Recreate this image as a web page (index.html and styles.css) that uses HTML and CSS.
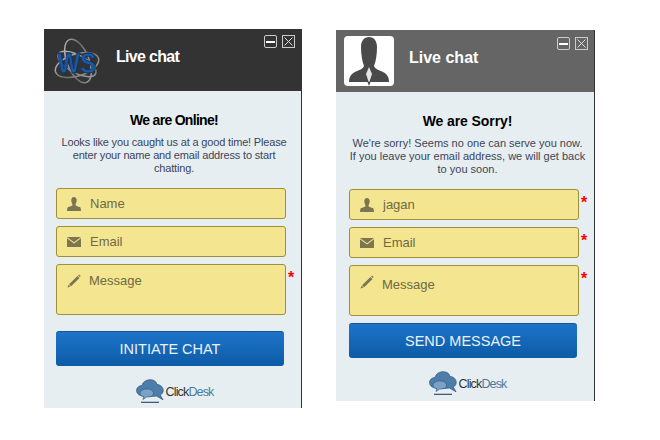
FILE: index.html
```html
<!DOCTYPE html>
<html lang="en">
<head>
<meta charset="utf-8">
<title>Live chat</title>
<link rel="stylesheet" href="styles.css">
</head>
<body>
<svg class="defs" width="0" height="0">
  <symbol id="i-user" viewBox="0 0 14 14"><path d="M7 0C5.300 0 4.300 1.300 4.300 3.200c0 1.500.5 2.900 1.100 3.700.2.700.1 1.500-.5 1.900-1.400.7-3.700 1-4.500 2L0 14h14l-.4-3.200c-.8-1-3.100-1.300-4.500-2-.6-.4-.7-1.200-.5-1.900.6-.8 1.100-2.200 1.100-3.700C9.700 1.300 8.700 0 7 0z"/></symbol>
  <symbol id="i-mail" viewBox="0 0 14 10"><path d="M0 0h14L7 5.200z"/><path d="M0 1.300V10h14V1.300L7 6.600z"/></symbol>
  <symbol id="i-pen" viewBox="0 0 14 14"><path d="M12 .4l1.700 1.700-.9.9-1.700-1.700zM10.500 1.900l2 2-8.400 8.300-2-2zM1.700 10.800l1.800 1.800-3.100 1z"/></symbol>
  <symbol id="i-cloud" viewBox="0 0 28 24">
    <path fill="#4f7da9" stroke="#2f5f8c" stroke-width=".8" d="M6 6.500C7 2.500 11 .4 15 .8c3.500.3 5.500 2.200 6 4.700 3.500.2 6.300 2.700 6.200 6 0 2-1.200 3.700-3 4.500l2.800 4.800-6.500-3.800c-3.500.6-9 .7-12.500.1C3 17 .5 14.500.6 11.200.7 8.700 3 6.600 6 6.500z"/>
    <path fill="#7ba2c6" stroke="#2f5f8c" stroke-width=".7" d="M4 15c-.5-3 3-5 7-5s7 2 6.500 5c-.4 2-3 3-6 3l-1 .1L7 20.500l.8-2.900C5.500 17.300 4.300 16.500 4 15z"/>
    <path d="M5 23.300h18" stroke="#24425f" stroke-width="1.100"/>
  </symbol>
  <linearGradient id="chrome" x1="0" y1="0" x2="1" y2="1">
    <stop offset="0" stop-color="#c8c8c8"/>
    <stop offset=".5" stop-color="#6e6e6e"/>
    <stop offset="1" stop-color="#a8a8a8"/>
  </linearGradient>
</svg>

<div class="page">

  <div class="panel panel-online">
    <div class="head head-dark">
      <div class="logo">
        <svg width="46" height="46" viewBox="0 0 46 46">
          <g fill="none" stroke="url(#chrome)" stroke-width="1.500">
            <ellipse cx="24" cy="23" rx="11" ry="23" transform="rotate(-22 24 23)"/>
            <ellipse cx="23" cy="27" rx="22.500" ry="11" transform="rotate(-18 23 27)"/>
            <ellipse cx="23" cy="26" rx="21" ry="9" transform="rotate(28 23 26)"/>
          </g>
          <text class="logo-text" x="3.500" y="28" transform="scale(1 1.250)">WS</text>
        </svg>
      </div>
      <div class="head-title title-tight">Live chat</div>
      <div class="win-btns">
        <span class="win-btn win-min"></span>
        <span class="win-btn win-close"><svg width="11" height="11" viewBox="0 0 11 11"><path d="M1.500 1.500l8 8M9.500 1.500l-8 8" stroke="#ddd" stroke-width="1"/></svg></span>
      </div>
    </div>
    <div class="body body-online">
      <div class="copy">
        <h2>We are Online!</h2>
        <p class="intro">Looks like you caught us at a good time! Please enter your name and email address to start chatting.</p>
      </div>
      <div class="fields">
        <div class="field-row">
          <div class="field"><svg class="ico"><use href="#i-user"/></svg><span>Name</span></div>
        </div>
        <div class="field-row">
          <div class="field"><svg class="ico ico-mail"><use href="#i-mail"/></svg><span>Email</span></div>
        </div>
        <div class="field-row">
          <div class="field field-msg"><svg class="ico"><use href="#i-pen"/></svg><span>Message</span></div>
          <span class="req">*</span>
        </div>
      </div>
      <button class="send send-online">INITIATE CHAT</button>
      <div class="brand"><svg class="cloud"><use href="#i-cloud"/></svg><span class="brand-name"><b>Click</b>Desk</span></div>
    </div>
  </div>

  <div class="panel panel-sorry">
    <div class="head head-grey">
      <div class="avatar">
        <svg width="50" height="50" viewBox="0 0 50 50">
          <path fill="#4a4a4a" d="M25 1c-5 0-8 4-8 10 0 7 1 14 3 19-1 3-5 4-9 6-4 2-6 5-6 10h40c0-5-2-8-6-10-4-2-8-3-9-6 2-5 3-12 3-19 0-6-3-10-8-10z"/>
          <path fill="#e4e4e4" d="M25 31l3 7-3 9-3-9z"/>
          <path fill="#444" d="M23.500 46h3L25 50z"/>
        </svg>
      </div>
      <div class="head-title">Live chat</div>
      <div class="win-btns">
        <span class="win-btn win-min"></span>
        <span class="win-btn win-close"><svg width="11" height="11" viewBox="0 0 11 11"><path d="M1.500 1.500l8 8M9.500 1.500l-8 8" stroke="#ddd" stroke-width="1"/></svg></span>
      </div>
    </div>
    <div class="body body-sorry">
      <div class="copy">
        <h2>We are Sorry!</h2>
        <p class="intro">We're sorry! Seems no one can serve you now. If you leave your email address, we will get back to you soon.</p>
      </div>
      <div class="fields">
        <div class="field-row">
          <div class="field"><svg class="ico"><use href="#i-user"/></svg><span>jagan</span></div>
          <span class="req">*</span>
        </div>
        <div class="field-row">
          <div class="field"><svg class="ico ico-mail"><use href="#i-mail"/></svg><span>Email</span></div>
          <span class="req">*</span>
        </div>
        <div class="field-row">
          <div class="field field-msg msg-low"><svg class="ico"><use href="#i-pen"/></svg><span>Message</span></div>
          <span class="req">*</span>
        </div>
      </div>
      <button class="send send-sorry">SEND MESSAGE</button>
      <div class="brand"><svg class="cloud"><use href="#i-cloud"/></svg><span class="brand-name"><b>Click</b>Desk</span></div>
    </div>
  </div>

</div>
</body>
</html>
```

FILE: styles.css
```css
*{
	margin: 0;
	padding: 0;
	box-sizing: border-box;
}
html,body{
	background: #fff;
	font-family: "Liberation Sans", Arial, sans-serif;
}
.defs{
	display: block;
	height: 0;
}
.page{
	display: flex;
	align-items: flex-start;
	gap: 34px;
	padding: 29px 0 0 44px;
}
.panel{
	border-right: 1px solid #333;
	background: #e6eef2;
}
.panel-online{
	width: 258px;
	height: 379px;
}
.panel-sorry{
	width: 259px;
	height: 371px;
	margin-top: 1px;
}
.head{
	height: 62px;
	display: flex;
	align-items: center;
	color: #fff;
	padding-left: 10px;
}
.head-dark{
	background: #333;
}
.head-grey{
	background: #656565;
	padding-left: 8px;
}
.logo{
	width: 46px;
	height: 46px;
	margin-top: 2px;
	margin-right: 16px;
}
.logo-text{
	font: bold 24px "Liberation Sans", sans-serif;
	fill: #1a5aa8;
	stroke: #0d2f60;
	stroke-width: .6px;
}
.avatar{
	width: 50px;
	height: 50px;
	background: #fff;
	border-radius: 4px;
	margin-right: 15px;
}
.head-title{
	font-size: 16px;
	font-weight: bold;
	margin-bottom: 6px;
}
.title-tight{
	letter-spacing: -.7px;
}
.win-btns{
	display: flex;
	gap: 5px;
	margin-left: auto;
	margin-right: 6px;
	align-self: flex-start;
	margin-top: 6px;
}
.head-grey .win-btns{
	margin-top: 7px;
}
.win-btn{
	width: 13px;
	height: 13px;
	border: 1px solid #ccc;
	display: flex;
	align-items: center;
	justify-content: center;
}
.win-min{
	border-radius: 2px;
}
.win-min:before{
	content: "";
	display: block;
	width: 9px;
	height: 2px;
	background: #fff;
}
.body{
	padding-top: 21px;
	padding-left: 12px;
}
.body-sorry{
	padding-left: 13px;
}
.copy{
	text-align: center;
}
.body-online .copy{
	width: 244px;
	margin-left: -4px;
	letter-spacing: -.17px;
}
.body-online h2{
	letter-spacing: -.7px;
}
.body-sorry .copy{
	width: 236px;
	margin-left: .500px;
}
.body-sorry h2{
	letter-spacing: -.1px;
}
h2{
	font-size: 14px;
	line-height: 17px;
	color: #000;
}
.intro{
	font-size: 11px;
	line-height: 13px;
	color: #3d4555;
	margin-top: 7px;
}
.fields{
	display: flex;
	flex-direction: column;
	gap: 7px;
	margin-top: 13px;
}
.field-row{
	display: flex;
}
.field{
	width: 230px;
	height: 31px;
	display: flex;
	align-items: center;
	background: #f4e590;
	border: 1px solid #a08f36;
	border-radius: 3px;
	padding-left: 10px;
	font-size: 13px;
	color: #6d6b43;
}
.field span{
	margin-left: 9px;
}
.field-msg{
	height: 51px;
	align-items: flex-start;
	padding-top: 9px;
}
.field-msg span{
	margin-left: 8px;
	margin-top: -1px;
}
.msg-low span{
	margin-top: 2px;
}
.ico{
	width: 14px;
	height: 14px;
	fill: #7b7550;
	flex: none;
}
.ico-mail{
	height: 10px;
}
.req{
	color: #f00;
	font-size: 16px;
	line-height: 16px;
	margin: 6px 0 0 2px;
	font-weight: bold;
}
.send{
	display: block;
	width: 228px;
	height: 35px;
	border: 0;
	border-radius: 3px;
	background: linear-gradient(#1e73c8, #0c5ba6);
	border-top: 1px solid #125596;
	color: #e9f2fb;
	font: 14.500px "Liberation Sans", Arial, sans-serif;
}
.send-online{
	margin-top: 16px;
}
.send-sorry{
	margin-top: 7px;
}
.brand{
	display: flex;
	justify-content: center;
	align-items: center;
	height: 24px;
	width: 237px;
	margin-top: 13px;
}
.cloud{
	width: 28px;
	height: 24px;
	flex: none;
}
.brand-name{
	font-size: 12.500px;
	letter-spacing: -.85px;
	color: #4d7b9f;
	margin-left: 2px;
	margin-top: 2px;
}
.brand-name b{
	font-weight: normal;
	color: #333;
}
```
